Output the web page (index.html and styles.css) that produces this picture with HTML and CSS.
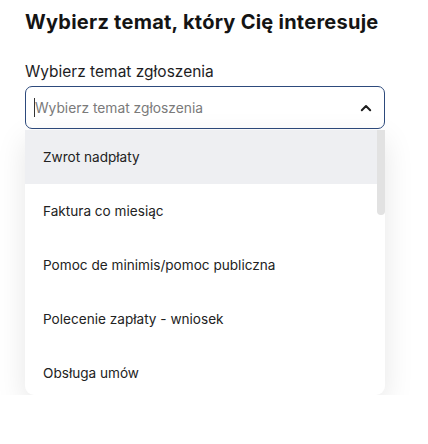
FILE: index.html
```html
<!DOCTYPE html>
<html lang="pl">
<head>
<meta charset="utf-8">
<link rel="stylesheet" href="styles.css">
</head>
<body>
<main class="page">
  <h1 class="title">Wybierz temat, który Cię interesuje</h1>
  <label class="label" for="topic">Wybierz temat zgłoszenia</label>
  <div class="select">
    <div class="control">
      <span class="caret"></span>
      <span class="placeholder">Wybierz temat zgłoszenia</span>
      <svg class="chevron" width="12" height="8" viewBox="0 0 12 8" aria-hidden="true">
        <path d="M1.8 6.2 L6 2 L10.2 6.2" fill="none" stroke="#1e1e1e" stroke-width="2" stroke-linecap="round" stroke-linejoin="round"/>
      </svg>
    </div>
    <div class="menu">
      <ul class="options">
        <li class="option active">Zwrot nadpłaty</li>
        <li class="option">Faktura co miesiąc</li>
        <li class="option">Pomoc de minimis/pomoc publiczna</li>
        <li class="option">Polecenie zapłaty - wniosek</li>
        <li class="option">Obsługa umów</li>
      </ul>
      <div class="thumb"></div>
    </div>
  </div>
</main>
</body>
</html>
```
FILE: styles.css
```css
* { box-sizing: border-box; }
html, body { margin: 0; padding: 0; background: #ffffff; }
body {
  font-family: Inter, "Noto Sans", "DejaVu Sans", sans-serif;
  color: #1d1d1f;
}
.page {
  padding: 10px 43px 0 25px;
  display: flex;
  flex-direction: column;
}
.title {
  margin: 0;
  font-size: 20px;
  line-height: 24px;
  font-weight: 700;
  color: #141414;
  letter-spacing: 0.25px;
}
.label {
  margin-top: 28px;
  font-size: 15.5px;
  line-height: 20px;
  color: #1d1d1f;
}
.select {
  margin-top: 4px;
  width: 360px;
}
.control {
  height: 43px;
  border: 1px solid #2d4a7c;
  border-radius: 7px;
  display: flex;
  align-items: center;
  padding: 0 12px 0 8px;
  background: #fff;
}
.caret {
  width: 1px;
  height: 19px;
  background: #333;
  margin-right: 0;
}
.placeholder {
  flex: 1;
  font-size: 13.8px;
  color: #7a7a7a;
}
.chevron { display: block; margin-right: 0; }
.menu {
  position: relative;
  margin-top: 1px;
  height: 265px;
  overflow: hidden;
  background: #fff;
  border-radius: 0 0 9px 9px;
  box-shadow: 0 10px 30px rgba(0, 0, 0, 0.10);
  padding-right: 8px;
}
.options {
  list-style: none;
  margin: 0;
  padding: 0;
}
.thumb {
  position: absolute;
  top: 0;
  right: 0;
  width: 8px;
  height: 85px;
  background: #e2e2e2;
  border-radius: 0 0 4px 4px;
}
.option {
  height: 54px;
  display: flex;
  align-items: center;
  padding-left: 18px;
  font-size: 13.6px;
  color: #222;
}
.option.active { background: #eeeff2; }
```
